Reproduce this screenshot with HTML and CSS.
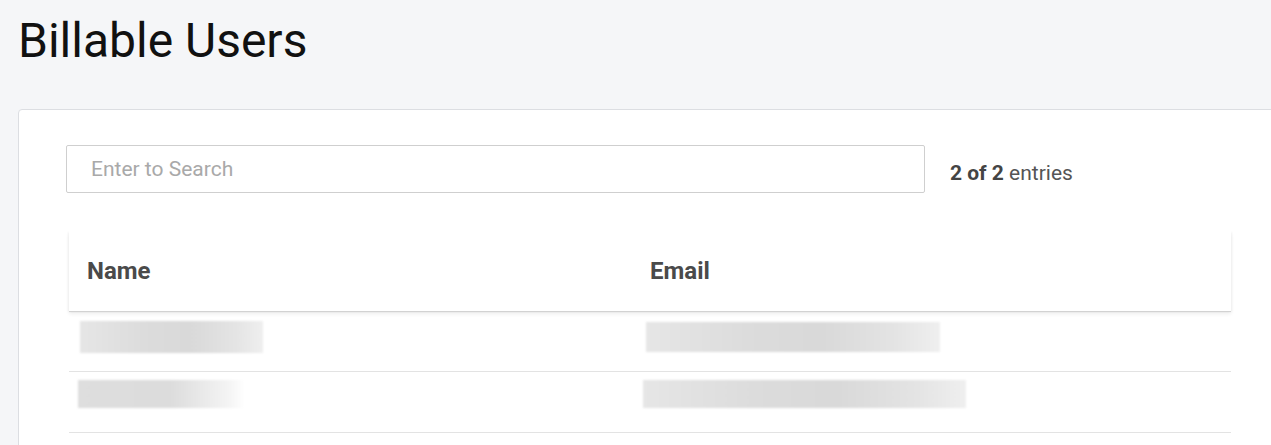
FILE: index.html
```html
<!DOCTYPE html>
<html lang="en">
<head>
  <meta charset="UTF-8" />
  <meta name="viewport" content="width=device-width, initial-scale=1.0" />
  <title>Billable Users</title>
  <link rel="stylesheet" href="styles.css">
</head>
<body>
  <main class="page">
    <h1 class="page-title">Billable Users</h1>

    <section class="card">
      <div class="toolbar">
        <input type="text" class="search" placeholder="Enter to Search" />
        <span class="count"><strong>2 of 2</strong> entries</span>
      </div>

      <div class="table">
        <div class="row head">
          <div class="cell">Name</div>
          <div class="cell">Email</div>
        </div>
        <div class="row">
          <div class="cell"><span class="redacted r1"></span></div>
          <div class="cell"><span class="redacted r2"></span></div>
        </div>
        <div class="row">
          <div class="cell"><span class="redacted r3"></span></div>
          <div class="cell"><span class="redacted r4"></span></div>
        </div>
      </div>
    </section>
  </main>
</body>
</html>
```

FILE: styles.css
```css
html, body {
  margin: 0;
  padding: 0;
  background: #f5f6f8;
  overflow: hidden;
}
body {
  font-family: Roboto, "Liberation Sans", Arial, sans-serif;
  color: #444;
}
.page {
  padding: 0 0 0 18px;
}
.page-title {
  margin: 0;
  padding: 11px 0 0 0;
  height: 109px;
  box-sizing: border-box;
  font-size: 48px;
  font-weight: 400;
  line-height: 60px;
  color: #111;
}
.card {
  width: 1266px;
  box-sizing: border-box;
  background: #fff;
  border: 1px solid #dcdee2;
  border-radius: 4px;
  padding: 35px 47px 40px 47px;
}
.toolbar {
  display: flex;
  align-items: center;
  gap: 25px;
}
.search {
  width: 859px;
  height: 48px;
  box-sizing: border-box;
  border: 1px solid #cfcfcf;
  border-radius: 2px;
  padding: 0 24px;
  font-family: inherit;
  font-size: 21px;
  color: #333;
  outline: none;
}
.search::placeholder {
  color: #a9a9a9;
}
.count {
  font-size: 21px;
  color: #555;
  padding-top: 8px;
}
.count strong {
  color: #444;
}
.table {
  margin: 38px 3px 0 3px;
  width: 1162px;
}
.row {
  display: grid;
  grid-template-columns: 563px 1fr;
  height: 60px;
  border-bottom: 1px solid #e3e3e3;
}
.row.head {
  height: 80px;
  border-bottom: 0;
  align-items: center;
  font-size: 24px;
  font-weight: 700;
  color: #4a4a4a;
  box-shadow: 0 1px 0 #d2d2d2, 0 3px 4px rgba(0, 0, 0, 0.07), 1px 1px 2px rgba(0, 0, 0, 0.04), -1px 1px 2px rgba(0, 0, 0, 0.04);
  position: relative;
}
.row.head .cell {
  padding: 0 18px;
}
.redacted {
  display: block;
  height: 32px;
  background: linear-gradient(90deg, #e6e6e6 0%, #dcdcdc 35%, #d9d9d9 60%, #e4e4e4 85%, #efefef 100%);
  filter: blur(1px);
}
.r1 {
  width: 183px;
  margin: 10px 0 0 11px;
}
.r2 {
  width: 294px;
  margin: 11px 0 0 14px;
  height: 30px;
}
.r3 {
  width: 167px;
  height: 28px;
  margin: 8px 0 0 9px;
  background: linear-gradient(90deg, #dedede 0%, #dcdcdc 55%, #f4f4f4 90%, #fff 100%);
}
.r4 {
  width: 323px;
  height: 28px;
  margin: 8px 0 0 11px;
}
```
